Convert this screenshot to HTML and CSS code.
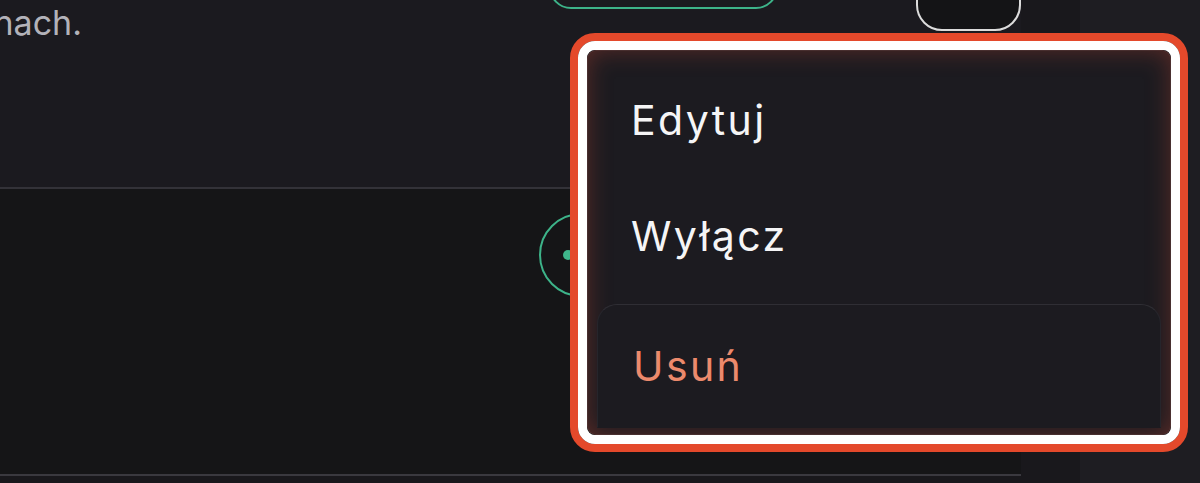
FILE: index.html
```html
<!DOCTYPE html>
<html lang="pl">
<head>
<meta charset="utf-8">
<title>Menu</title>
<link rel="stylesheet" href="styles.css">
</head>
<body>
<div class="layout">
  <main class="main">
    <section class="card">
      <div class="card-top">
        <div class="desc"><p class="desc-text">Przypomnienia o terminach.</p></div>
        <div class="actions">
          <button class="btn-green" type="button"></button>
          <button class="btn-ghost" type="button"></button>
        </div>
      </div>
      <div class="card-bottom">
        <button class="btn-more" type="button" aria-label="Więcej">
          <svg width="36" height="12" viewBox="0 0 36 12"><circle cx="5" cy="6" r="5" fill="#3fb68b"/><circle cx="18" cy="6" r="5" fill="#3fb68b"/><circle cx="31" cy="6" r="5" fill="#3fb68b"/></svg>
        </button>
      </div>
      <div class="card-rule"></div>
    </section>
  </main>
  <aside class="side"></aside>
</div>

<div class="menu-highlight">
  <div class="menu-ring">
    <ul class="menu">
      <li class="menu-item">Edytuj</li>
      <li class="menu-item">Wyłącz</li>
      <li class="menu-item menu-item-danger">Usuń</li>
    </ul>
  </div>
</div>
</body>
</html>
```

FILE: styles.css
```css
* { box-sizing: border-box; }

html, body {
  margin: 0;
  padding: 0;
}

body {
  width: 1200px;
  height: 483px;
  overflow: hidden;
  background: #1e1d22;
  font-family: Inter, "Noto Sans", sans-serif;
  position: relative;
}

.layout {
  display: flex;
  height: 483px;
}

.main {
  width: 1080px;
  background: #19181c;
}

.side {
  flex: 1;
  background: #1e1d22;
}

.card {
  width: 1021px;
  display: flex;
  flex-direction: column;
}

.card-top {
  height: 187px;
  background: #1b1a1f;
  display: flex;
  border-bottom: 2px solid #333238;
  box-sizing: content-box;
}

.desc {
  width: 82px;
  display: flex;
  justify-content: flex-end;
  padding-top: 2px;
}

.desc-text {
  margin: 0;
  white-space: nowrap;
  font-size: 34px;
  color: #b3b2b9;
  flex-shrink: 0;
}

.actions {
  display: flex;
  align-items: flex-start;
  margin-left: 467px;
  margin-top: -40px;
  gap: 138px;
}

.btn-green {
  width: 229px;
  height: 49px;
  border: 2px solid #3db389;
  border-radius: 22px;
  background: transparent;
}

.btn-ghost {
  width: 105px;
  height: 71px;
  border: 2px solid #dcdcdc;
  border-radius: 26px;
  background: #141416;
}

.card-bottom {
  height: 285px;
  background: #151517;
  padding: 24px 0 0 539px;
}

.btn-more {
  width: 84px;
  height: 84px;
  border: 2px solid #3db389;
  border-radius: 50%;
  background: transparent;
  display: flex;
  align-items: center;
  justify-content: center;
  padding: 0;
}

.card-rule {
  height: 2px;
  background: #3a393f;
}

/* overlay menu with annotation highlight */
.menu-highlight {
  position: absolute;
  left: 570px;
  top: 33px;
  width: 618px;
  height: 419px;
  border: 8px solid #e4492b;
  border-radius: 25px;
}

.menu-ring {
  height: 100%;
  border: 9px solid #ffffff;
  border-radius: 17px;
  overflow: hidden;
}

.menu {
  list-style: none;
  margin: 0;
  height: 100%;
  padding: 12px 10px 0;
  background: #1c1b20;
  border-radius: 9px;
  box-shadow: inset 0 0 24px rgba(200, 70, 50, 0.38), inset 0 0 0 1px rgba(120, 110, 115, 0.2);
  overflow: hidden;
  display: flex;
  flex-direction: column;
}

.menu-item {
  height: 116px;
  flex-shrink: 0;
  display: flex;
  align-items: center;
  padding-left: 34px;
  font-size: 41px;
  letter-spacing: 2.4px;
  color: #f5f5f6;
}

.menu-item-danger {
  margin-top: 10px;
  height: 124px;
  color: #ec8a6c;
  border: 1px solid #2f2e34;
  border-bottom-color: transparent;
  border-left-color: #26252b;
  border-right-color: #26252b;
  border-radius: 20px 20px 0 0;
  background: #1c1b20;
  padding-left: 35px;
}
```
